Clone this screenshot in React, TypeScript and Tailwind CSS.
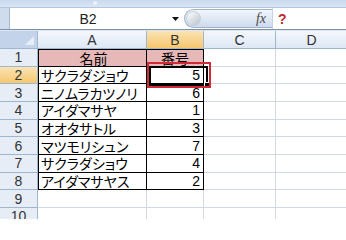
import React from 'react';

const data = [
  { n: 1, name: '名前', num: '番号' },
  { n: 2, name: 'サクラダジョウ', num: '5' },
  { n: 3, name: 'ニノムラカツノリ', num: '6' },
  { n: 4, name: 'アイダマサヤ', num: '1' },
  { n: 5, name: 'オオタサトル', num: '3' },
  { n: 6, name: 'マツモリシュン', num: '7' },
  { n: 7, name: 'サクラダショウ', num: '4' },
  { n: 8, name: 'アイダマサヤス', num: '2' },
];

const jp = "font-['Noto_Sans_CJK_JP','Noto_Sans',sans-serif] [font-feature-settings:'palt'] leading-none";
const latin = "font-['Liberation_Sans','Noto_Sans_CJK_JP',sans-serif] leading-none";

function ColHead({ label, w, active }: { label: string; w: string; active?: boolean }) {
  return (
    <div
      className={`${w} h-full flex items-center justify-center border-r border-b border-[#9eb6ce] text-[14px] text-[#333] ${latin} ${
        active ? 'bg-gradient-to-b from-[#fbe3b3] to-[#f5c76f]' : 'bg-gradient-to-b from-[#f4f7fc] to-[#dde7f4]'
      }`}
    >
      {label}
    </div>
  );
}

export default function App() {
  return (
    <div className="relative w-[346px] h-[219px] overflow-hidden bg-white">
      {/* ribbon edge */}
      <div className="h-[8px] bg-gradient-to-b from-[#c9d9ee] to-[#dbe6f4] border-b border-[#b3c7e1] relative">
        <div className="absolute left-[93px] top-[1px] w-[4px] h-[4px] rounded-full bg-[#eef3fa]" />
      </div>

      {/* formula bar */}
      <div className="flex h-[22px] bg-[#d7e3f2] border-b border-[#7f8fa6]">
        <div className="w-[9px] bg-[#cfdced]" />
        <div className="flex flex-1 bg-white border-l border-[#a6b8d2]">
          <div className={`w-[156px] flex items-center justify-center text-[14px] text-[#222] ${latin}`}>B2</div>
          <div className="w-[18px] flex items-center justify-center">
            <svg width="7" height="4" viewBox="0 0 7 4">
              <path d="M0 0h7L3.5 4z" fill="#111" />
            </svg>
          </div>
          <div className="relative w-[88px] h-[19px] mt-[1px] rounded-l-full border border-r-0 border-[#9fb3cf] bg-gradient-to-b from-[#f2f6fb] to-[#cddbed] flex items-center justify-end pr-[6px]">
            <div className="absolute left-[1px] top-[1px] w-[15px] h-[15px] rounded-full bg-gradient-to-br from-[#ffffff] to-[#b9c3cf] border border-[#c4cfdd]" />
            <span className="font-['Liberation_Serif',serif] italic text-[14px] text-[#4a4a4a] leading-none">fx</span>
          </div>
          <div className="w-px bg-[#c5d2e3]" />
          <div className={`pl-[5px] flex items-center text-[14px] font-bold text-[#c0282e] ${latin}`}>?</div>
        </div>
      </div>
      <div className="h-[1px] bg-[#dbe6f4]" />

      {/* grid */}
      <div className="flex">
        <div className="w-[3px] bg-[#a9c1e0]" />
        <div className="flex flex-col">
          <div className="flex h-[18px]">
            <div className="relative w-[38px] h-full bg-[#c3d4ea] border-r border-b border-[#9eb6ce]">
              <svg className="absolute right-[3px] bottom-[3px]" width="9" height="9" viewBox="0 0 9 9">
                <path d="M9 0V9H0z" fill="#e6edf6" />
              </svg>
            </div>
            <ColHead label="A" w="w-[109px]" />
            <ColHead label="B" w="w-[57px]" active />
            <ColHead label="C" w="w-[72px]" />
            <ColHead label="D" w="w-[72px]" />
          </div>

          {data.map((r) => (
            <div key={r.n} className="flex h-[17.67px]">
              <div
                className={`w-[38px] h-full flex items-center justify-center border-r border-b border-[#9eb6ce] text-[14px] text-[#333] ${latin} ${
                  r.n === 2 ? 'bg-gradient-to-b from-[#fbe3b3] to-[#f5c76f]' : 'bg-[#e6edf7]'
                }`}
              >
                {r.n}
              </div>
              <div
                className={`w-[109px] h-full flex items-center pl-[2px] border-l border-r border-b border-black text-[14px] text-black ${jp} ${
                  r.n === 1 ? 'justify-center bg-[#e6b8b7] border-t' : ''
                }`}
              >
                {r.name}
              </div>
              <div
                className={`w-[57px] h-full flex items-center border-r border-b border-black text-[14px] text-black ${
                  r.n === 1 ? `justify-center bg-[#e6b8b7] border-t ${jp}` : `justify-end pr-[3px] ${latin}`
                }`}
              >
                {r.num}
              </div>
              <div className="w-[72px] h-full border-r border-b border-[#d0d7e5]" />
              <div className="w-[72px] h-full border-r border-b border-[#d0d7e5]" />
            </div>
          ))}

          {[9, 10].map((n) => (
            <div key={n} className="flex h-[17.67px]">
              <div className={`w-[38px] h-full flex items-center justify-center border-r border-b border-[#9eb6ce] bg-[#e6edf7] text-[14px] text-[#333] ${latin}`}>
                {n}
              </div>
              <div className="w-[109px] h-full border-r border-b border-[#d0d7e5]" />
              <div className="w-[57px] h-full border-r border-b border-[#d0d7e5]" />
              <div className="w-[72px] h-full border-r border-b border-[#d0d7e5]" />
              <div className="w-[72px] h-full border-r border-b border-[#d0d7e5]" />
            </div>
          ))}
        </div>
      </div>

      {/* active cell B2 */}
      <div className="absolute left-[149px] top-[66px] w-[59px] h-[20px] border-2 border-black">
        <div className="absolute -right-[4px] -bottom-[4px] w-[6px] h-[6px] bg-black border border-white" />
      </div>
      {/* annotation */}
      <div className="absolute left-[147px] top-[62px] w-[64px] h-[26px] border-2 border-[#cf2a36]" />
    </div>
  );
}
